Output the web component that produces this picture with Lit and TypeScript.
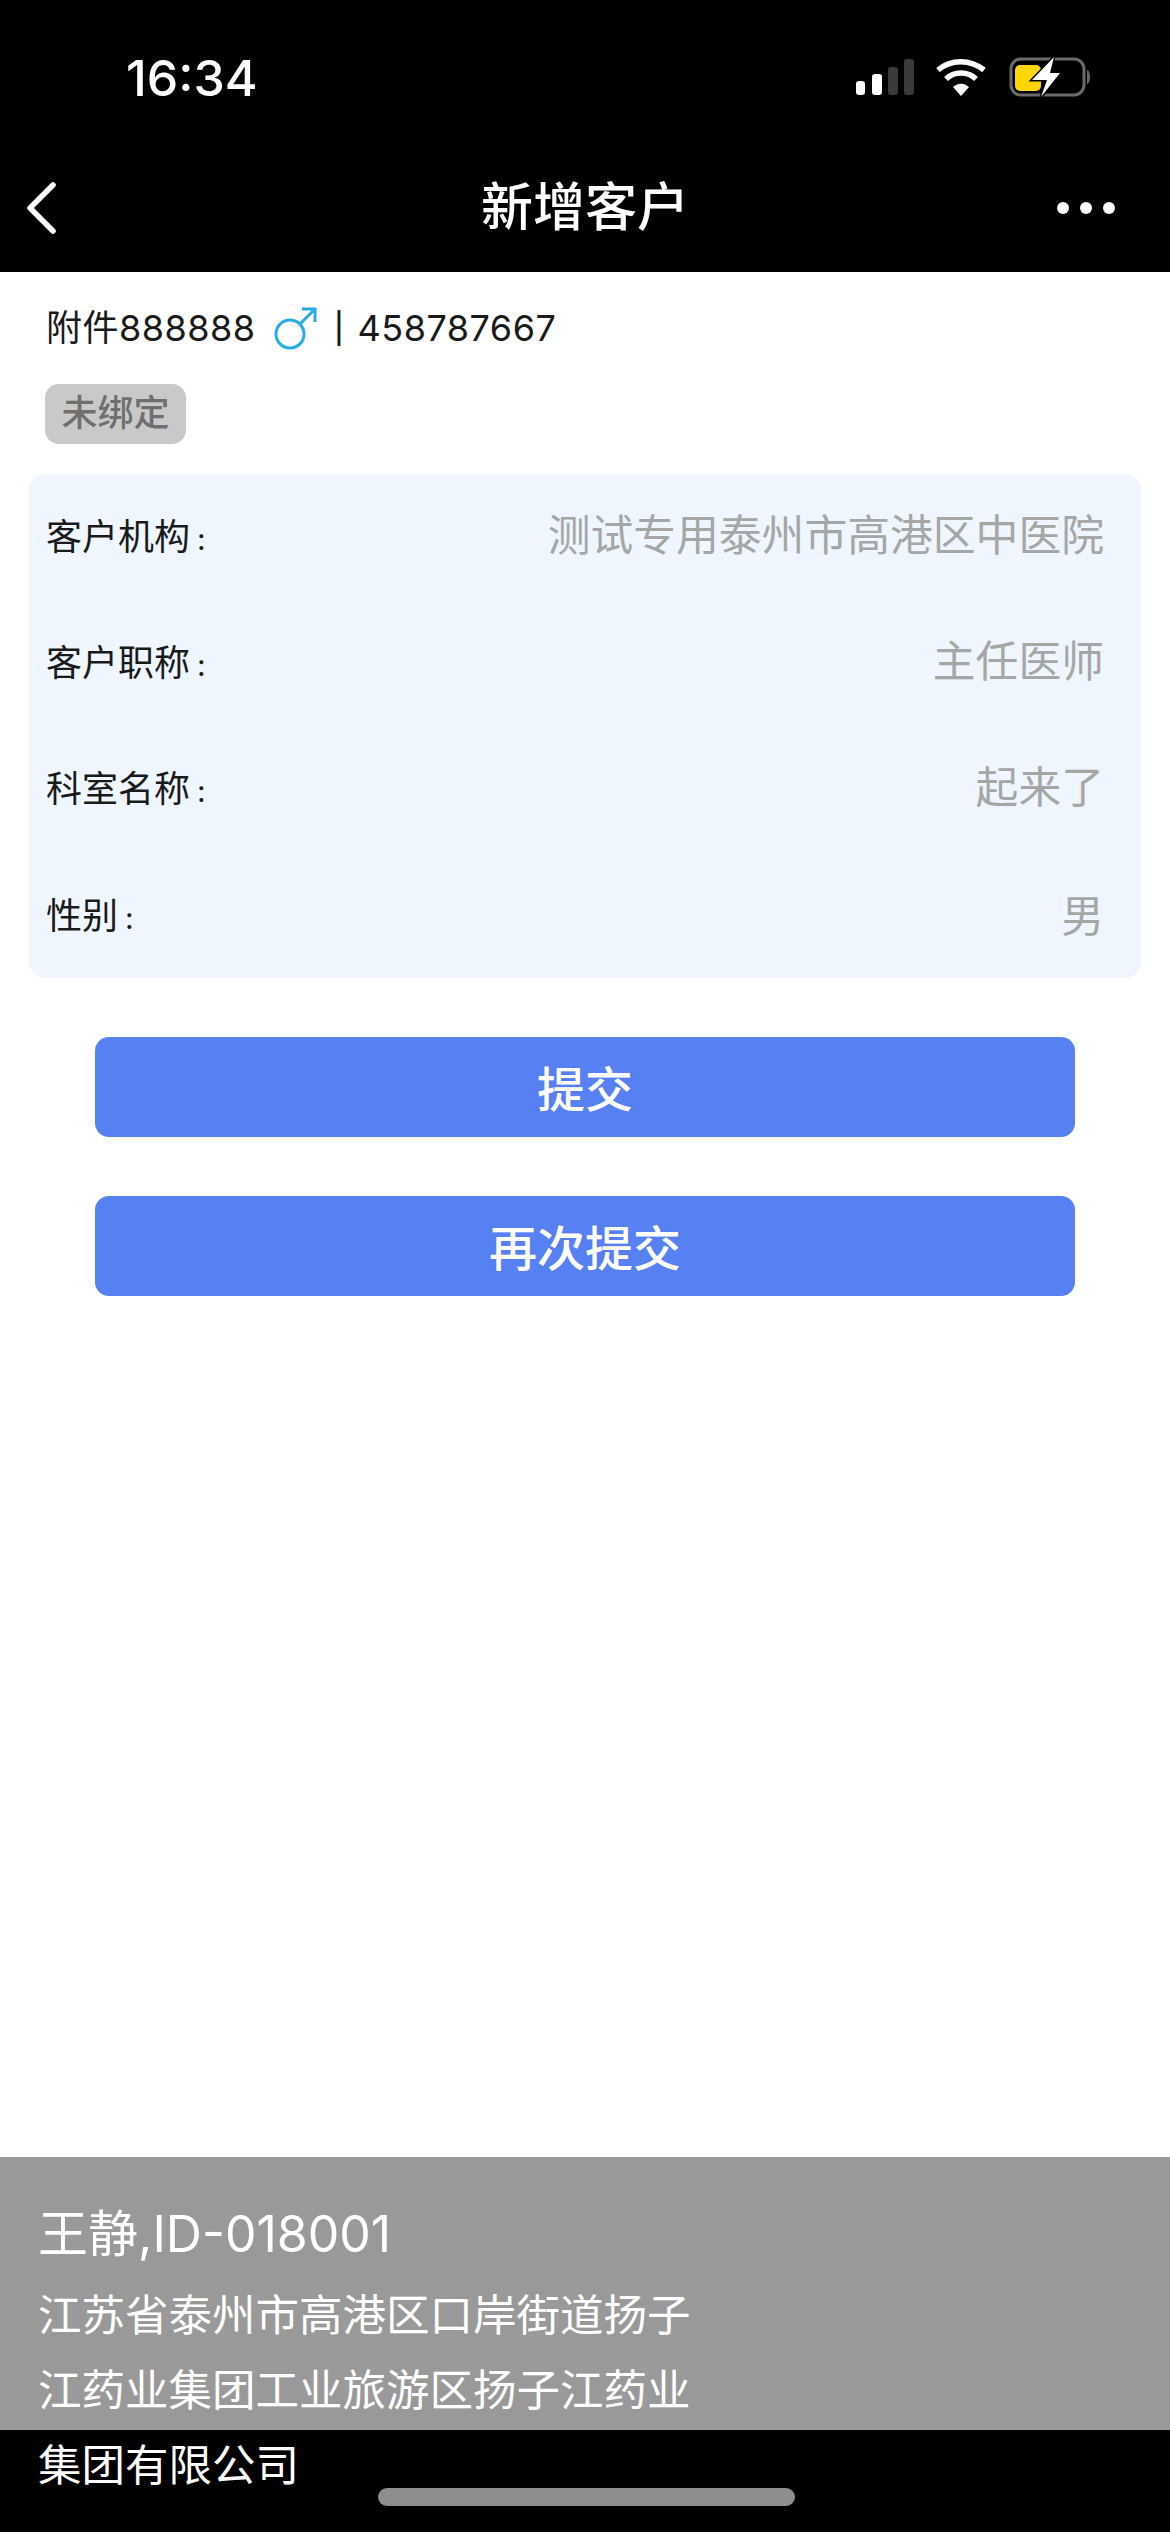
import { LitElement, html, css } from "lit";
import { customElement } from "lit/decorators.js";

const rows = [
  ["客户机构", "测试专用泰州市高港区中医院"],
  ["客户职称", "主任医师"],
  ["科室名称", "起来了"],
  ["性别", "男"],
];

@customElement("app-root")
export class AppRoot extends LitElement {
  static styles = css`
    :host { display: block; width: 1170px; height: 2532px; overflow: hidden; background: #fff;
      font-family: Inter, "Noto Sans CJK SC", sans-serif; }
    * { box-sizing: border-box; }
    .page { display: flex; flex-direction: column; height: 2532px; }
    .top { background: #000; color: #fff; height: 272px; flex: none; display: flex; flex-direction: column; }
    .status { height: 160px; padding: 48px 0 0 126px; display: flex; justify-content: space-between; align-items: flex-start; }
    .time { font-size: 50px; line-height: 60px; font-weight: 500; }
    .status svg { display: block; margin-top: 8px; margin-right: 79px; }
    .nav { height: 112px; display: grid; grid-template-columns: 1fr auto 1fr; align-items: center; padding: 0 55px 16px 26px; }
    .nav .left { display: flex; }
    .title { font-size: 52px; line-height: 64px; font-weight: 500; margin-left: 29px; }
    .more { justify-self: end; display: flex; gap: 11px; }
    .more i { width: 12px; height: 12px; border-radius: 50%; background: #fff; }
    .content { flex: 1; padding: 0 29px; display: flex; flex-direction: column; }
    .head { display: flex; align-items: center; padding: 32px 0 0 17px; height: 80px; font-size: 36px; line-height: 48px; color: #1a1a1a; letter-spacing: 0.5px; }
    .head svg { margin: 0 16px 0 18px; }
    .sep { margin-right: 13px; font-size: 30px; line-height: 40px; font-weight: 500; }
    .badge { align-self: flex-start; margin: 32px 0 0 16px; width: 141px; height: 60px; border-radius: 14px; background: #c9c9c9; color: #6f6f6f;
      font-size: 36px; line-height: 58px; text-align: center; font-weight: 500; }
    .card { margin-top: 30px; height: 504px; background: #eff6ff; border-radius: 16px; padding: 0 37px 0 17px; display: flex; flex-direction: column; gap: 2px; }
    .row { display: flex; justify-content: space-between; align-items: center; height: 124px; flex: none; }
    .row:last-child { padding-top: 6px; }
    .label { font-size: 36px; line-height: 48px; color: #1a1a1a; padding-top: 3px; }
    .row:last-child .label { padding-top: 0; }
    .colon { margin-left: 7px; font-size: 30px; }
    .value { font-size: 42.800px; line-height: 56px; color: #a6a6a6; }
    .btn { margin: 59px 66px 0; height: 100px; background: #5781f2; color: #fff; border-radius: 14px; font-size: 48px; font-weight: 500;
      display: flex; align-items: center; justify-content: center; padding-bottom: 2px; }
    .foot { position: relative; flex: none; height: 375px; background: linear-gradient(#999 273px, #000 273px); color: #fff; padding: 45px 38px 0; }
    .name { font-size: 50px; line-height: 64px; }
    .addr { width: 670px; font-size: 43.5px; line-height: 75px; margin-top: 12px; }
    .home { position: absolute; left: 378px; top: 331px; width: 417px; height: 18px; border-radius: 9px; background: #8e8e8e; }
  `;

  render() {
    return html`<div class="page">
      <div class="top">
        <div class="status">
          <div class="time">16:34</div>
          <svg width="235" height="46" viewBox="0 -6 235 46">
            <rect x="0" y="19" width="9" height="14" rx="3" fill="#fff"/>
            <rect x="16" y="12" width="10" height="21" rx="3" fill="#fff"/>
            <rect x="32" y="5" width="10" height="28" rx="3" fill="#3a3a3a"/>
            <rect x="48" y="-3" width="10" height="36" rx="3" fill="#3a3a3a"/>
            <path d="M82 8C95 -3 114 -3 128 8" fill="none" stroke="#fff" stroke-width="5.500"/>
            <path d="M90 17C98 9 112 9 120 17" fill="none" stroke="#fff" stroke-width="5.500"/>
            <path d="M97 25C102 20.500 108 20.500 113 25L105 34Z" fill="#fff"/>
            <rect x="155" y="-3" width="73" height="36" rx="10" fill="none" stroke="#6a6a6a" stroke-width="3"/>
            <path d="M231 8a3 7 0 0 1 0 14Z" fill="#6a6a6a"/>
            <rect x="159" y="3" width="26" height="26" rx="5" fill="#ffd60a"/>
            <path d="M198 -5L176 18H191L185 35L204 11H194Z" fill="#fff" stroke="#000" stroke-width="3" paint-order="stroke"/>
          </svg>
        </div>
        <div class="nav">
          <div class="left"><svg width="32" height="54" viewBox="0 0 32 54" fill="none" stroke="#fff" stroke-width="5.500" stroke-linecap="round" stroke-linejoin="round"><path d="M27 4L4 27L27 50"/></svg></div>
          <div class="title">新增客户</div>
          <div class="more"><i></i><i></i><i></i></div>
        </div>
      </div>
      <div class="content">
        <div class="head">
          <span>附件888888</span>
          <svg width="44" height="44" viewBox="0 0 44 44" fill="none" stroke="#29abe8" stroke-width="3"><circle cx="16" cy="28" r="14"/><path d="M26 18L41 3M28 3H41V16"/></svg>
          <span class="sep">|</span>
          <span>458787667</span>
        </div>
        <div class="badge">未绑定</div>
        <div class="card">
          ${rows.map(([l, v]) => html`<div class="row"><span class="label">${l}<span class="colon">:</span></span><span class="value">${v}</span></div>`)}
        </div>
        <div class="btn">提交</div>
        <div class="btn">再次提交</div>
      </div>
      <div class="foot">
        <div class="name">王静,ID-018001</div>
        <div class="addr">江苏省泰州市高港区口岸街道扬子江药业集团工业旅游区扬子江药业集团有限公司</div>
        <div class="home"></div>
      </div>
    </div>`;
  }
}
